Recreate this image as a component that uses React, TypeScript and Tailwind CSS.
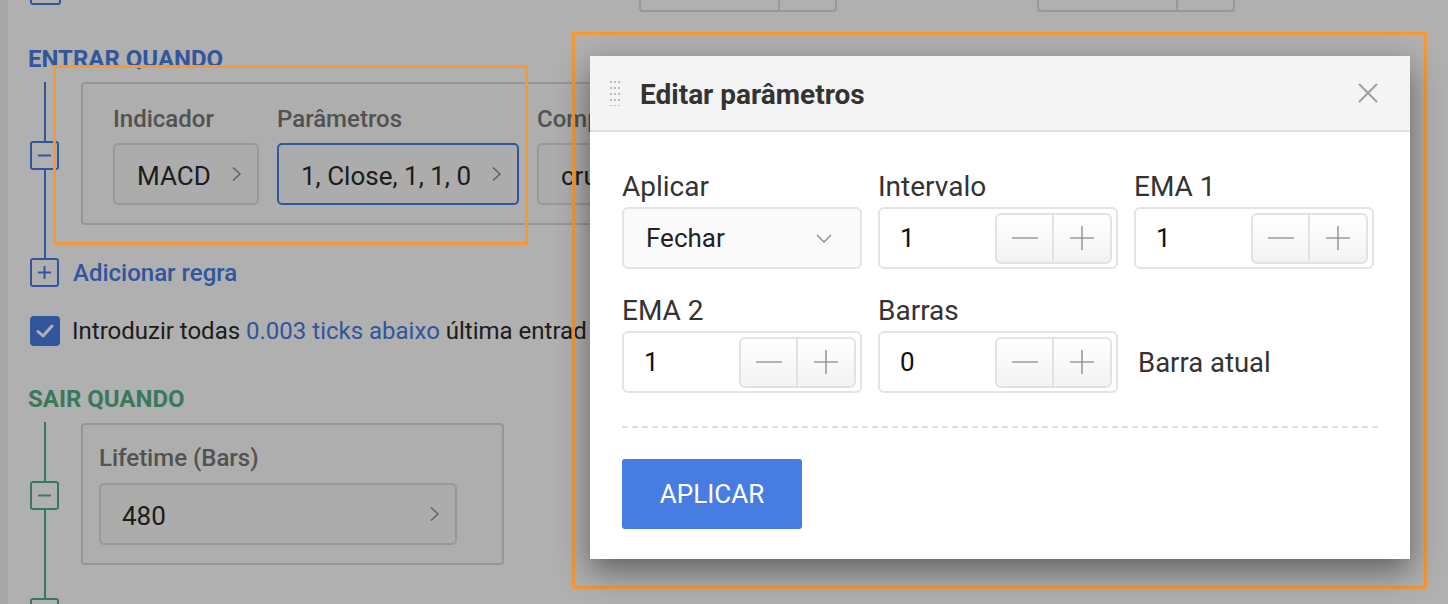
import React from "react";

const ChevronRight = ({ className = "" }: { className?: string }) => (
  <svg width="11" height="16" viewBox="0 0 11 16" className={className}>
    <polyline points="2,1.5 9,8 2,14.5" fill="none" stroke="currentColor" strokeWidth="1.4" />
  </svg>
);

const Minus = () => (
  <svg width="26" height="4" viewBox="0 0 26 4">
    <line x1="0" y1="2" x2="26" y2="2" stroke="#9a9a9a" strokeWidth="1.6" />
  </svg>
);

const Plus = () => (
  <svg width="24" height="24" viewBox="0 0 24 24">
    <line x1="0" y1="12" x2="24" y2="12" stroke="#9a9a9a" strokeWidth="1.6" />
    <line x1="12" y1="0" x2="12" y2="24" stroke="#9a9a9a" strokeWidth="1.6" />
  </svg>
);

const NumField = ({ value }: { value: string }) => (
  <div className="flex h-[62px] w-[240px] items-center justify-between rounded-[6px] border-2 border-[#e4e4e4] bg-white pl-[20px] pr-[4px]">
    <span className="text-[26px] leading-[30px] text-[#111]">{value}</span>
    <div className="flex h-[51px] w-[117px] overflow-hidden rounded-[6px] border-2 border-[#e2e2e2] bg-gradient-to-b from-white to-[#f3f3f3]">
      <div className="flex w-[57px] items-center justify-center border-r-2 border-[#e2e2e2]">
        <Minus />
      </div>
      <div className="flex flex-1 items-center justify-center">
        <Plus />
      </div>
    </div>
  </div>
);

const Label = ({ children }: { children: React.ReactNode }) => (
  <div className="mb-[4px] text-[28px] leading-[32px] text-[#333]">{children}</div>
);

const TreeBox = ({ sign, color }: { sign: "-" | "+"; color: string }) => (
  <div
    className={`flex h-[29px] w-[29px] shrink-0 items-center justify-center rounded-[3px] border-2 bg-white ${color}`}
  >
    <svg width="15" height="15" viewBox="0 0 15 15">
      <line x1="1" y1="7.5" x2="14" y2="7.5" stroke="currentColor" strokeWidth="2" />
      {sign === "+" && <line x1="7.5" y1="1" x2="7.5" y2="14" stroke="currentColor" strokeWidth="2" />}
    </svg>
  </div>
);

export default function App() {
  return (
    <div className="relative h-[604px] w-[1448px] overflow-hidden bg-white font-['Roboto',sans-serif]">
      <div className="flex h-full">
        <div className="h-full w-[8px] shrink-0 bg-[#f2f2f2]" />
        <div className="flex flex-1 flex-col pl-[22px]">
          {/* top partial row */}
          <div className="flex h-[12px] shrink-0 items-end">
            <div className="mb-[7px] h-[30px] w-[31px] rounded-[3px] border-2 border-[#477de2]" />
            <div className="ml-[578px] flex h-[50px] w-[198px] rounded-[4px] border-2 border-[#dcdcdc]">
              <div className="w-[139px] border-r-2 border-[#dcdcdc]" />
            </div>
            <div className="ml-[200px] flex h-[50px] w-[198px] rounded-[4px] border-2 border-[#dcdcdc]">
              <div className="w-[139px] border-r-2 border-[#dcdcdc]" />
            </div>
          </div>

          {/* ENTRAR QUANDO */}
          <div className="-ml-[2px] mt-[33px] shrink-0 text-[24px] font-bold leading-[28px] text-[#477de2]">ENTRAR QUANDO</div>

          <div className="mt-[9px] flex h-[176px] shrink-0 items-start">
            <div className="flex h-full w-[29px] shrink-0 flex-col items-center">
              <div className="h-[59px] w-[2px] bg-[#477de2]" />
              <TreeBox sign="-" color="border-[#477de2] text-[#477de2]" />
              <div className="w-[2px] flex-1 bg-[#477de2]" />
            </div>
            <div className="ml-[22px] flex w-[900px] shrink-0 gap-[18px] rounded-[4px] border-2 border-[#dadada] bg-[#fcfcfc] pb-[18px] pl-[30px] pt-[21px]">
              <div className="flex flex-col">
                <div className="mb-[10px] text-[24px] font-medium leading-[28px] text-[#777]">Indicador</div>
                <div className="flex h-[62px] w-[146px] items-center justify-between rounded-[5px] border-2 border-[#dcdcdc] bg-[#f9f9f9] pl-[22px] pr-[15px]">
                  <span className="pt-[3px] text-[26px] leading-[30px] text-[#2a2a2a]">MACD</span>
                  <ChevronRight className="text-[#888]" />
                </div>
              </div>
              <div className="flex flex-col">
                <div className="mb-[10px] text-[24px] font-medium leading-[28px] text-[#777]">Parâmetros</div>
                <div className="flex h-[62px] w-[242px] items-center justify-between rounded-[5px] border-2 border-[#477de2] bg-[#f9f9f9] pl-[22px] pr-[15px]">
                  <span className="pt-[3px] text-[26px] leading-[30px] text-[#2a2a2a]">1, Close, 1, 1, 0</span>
                  <ChevronRight className="text-[#888]" />
                </div>
              </div>
              <div className="flex flex-col">
                <div className="mb-[10px] text-[24px] font-medium leading-[28px] text-[#777]">Comp</div>
                <div className="flex h-[62px] w-[200px] items-center justify-between rounded-[5px] border-2 border-[#dcdcdc] bg-[#f9f9f9] pl-[22px] pr-[15px]">
                  <span className="pt-[3px] text-[26px] leading-[30px] text-[#2a2a2a]">cru</span>
                  <ChevronRight className="text-[#888]" />
                </div>
              </div>
            </div>
          </div>

          <div className="flex h-[29px] shrink-0 items-center">
            <TreeBox sign="+" color="border-[#477de2] text-[#477de2]" />
            <span className="ml-[14px] text-[24px] font-medium leading-[28px] text-[#477de2]">Adicionar regra</span>
          </div>

          <div className="mt-[29px] flex h-[30px] shrink-0 items-center">
            <div className="flex h-[30px] w-[30px] items-center justify-center rounded-[4px] bg-[#477de2]">
              <svg width="18" height="14" viewBox="0 0 18 14">
                <polyline points="2,7.5 7,12 16,2" fill="none" stroke="white" strokeWidth="3" strokeLinejoin="round" strokeLinecap="round" />
              </svg>
            </div>
            <span className="ml-[12px] whitespace-nowrap text-[24px] leading-[28px] text-[#2a2a2a]">
              Introduzir todas <span className="text-[#477de2]">0.003 ticks abaixo</span> última entrad
            </span>
          </div>

          {/* SAIR QUANDO */}
          <div className="-ml-[2px] mt-[39px] shrink-0 text-[24px] font-bold leading-[28px] text-[#52b088]">SAIR QUANDO</div>

          <div className="mt-[9px] flex h-[176px] shrink-0 items-start">
            <div className="flex h-full w-[29px] shrink-0 flex-col items-center">
              <div className="h-[59px] w-[2px] bg-[#52b088]" />
              <TreeBox sign="-" color="border-[#52b088] text-[#52b088]" />
              <div className="w-[2px] flex-1 bg-[#52b088]" />
            </div>
            <div className="ml-[22px] mt-[1px] flex w-[423px] shrink-0 flex-col rounded-[4px] border-2 border-[#dadada] bg-[#fcfcfc] pb-[18px] pl-[16px] pt-[19px]">
              <div className="mb-[11px] text-[24px] font-medium leading-[28px] text-[#777]">Lifetime (Bars)</div>
              <div className="flex h-[62px] w-[358px] items-center justify-between rounded-[5px] border-2 border-[#dcdcdc] bg-[#f9f9f9] pl-[21px] pr-[15px]">
                <span className="pt-[3px] text-[26px] leading-[30px] text-[#2a2a2a]">480</span>
                <ChevronRight className="text-[#888]" />
              </div>
            </div>
          </div>

          <div className="flex h-[29px] shrink-0 items-center">
            <TreeBox sign="-" color="border-[#52b088] text-[#52b088]" />
            <span className="ml-[36px] whitespace-nowrap pt-[8px] text-[24px] font-medium leading-[28px] text-[#2a2a2a]">
              Sair de todas as posições abertas após o tempo limite
            </span>
          </div>
        </div>
      </div>

      {/* dim overlay */}
      <div className="absolute inset-0 bg-black/[0.31]" />

      {/* annotation rectangles */}
      <div className="absolute left-[53px] top-[65px] h-[180px] w-[475px] border-[3px] border-[#f2993a]" />
      <div className="absolute left-[572px] top-[32px] h-[557px] w-[855px] border-[3px] border-[#f2993a]" />

      {/* modal */}
      <div className="absolute left-[590px] top-[56px] w-[820px] bg-white shadow-[0_12px_30px_rgba(0,0,0,0.45)]">
        <div className="flex h-[76px] items-center border-b-2 border-[#e2e2e2] bg-[#f4f4f4] pl-[20px] pr-[32px]">
          <svg width="10" height="26" viewBox="0 0 10 26" className="shrink-0">
            {[0, 1, 2, 3, 4].map((r) =>
              [0, 1, 2].map((c) => (
                <rect key={`${r}-${c}`} x={c * 4} y={1 + r * 6} width="2" height="2" fill="#bdbdbd" />
              ))
            )}
          </svg>
          <div className="ml-[20px] flex-1 pt-[4px] text-[28px] font-bold leading-[32px] text-[#333]">Editar parâmetros</div>
          <svg width="20" height="20" viewBox="0 0 20 20" className="shrink-0">
            <line x1="1" y1="1" x2="19" y2="19" stroke="#9aa0a6" strokeWidth="2" />
            <line x1="19" y1="1" x2="1" y2="19" stroke="#9aa0a6" strokeWidth="2" />
          </svg>
        </div>

        <div className="px-[32px] pb-[30px] pt-[39px]">
          <div className="flex gap-[16px]">
            <div>
              <Label>Aplicar</Label>
              <div className="flex h-[62px] w-[240px] items-center justify-between rounded-[6px] border-2 border-[#e4e4e4] bg-[#fafafa] pl-[22px] pr-[28px]">
                <span className="text-[26px] leading-[30px] text-[#222]">Fechar</span>
                <svg width="16" height="9" viewBox="0 0 16 9">
                  <polyline points="1,1 8,8 15,1" fill="none" stroke="#888" strokeWidth="1.3" />
                </svg>
              </div>
            </div>
            <div>
              <Label>Intervalo</Label>
              <NumField value="1" />
            </div>
            <div>
              <Label>EMA 1</Label>
              <NumField value="1" />
            </div>
          </div>

          <div className="mt-[26px] flex items-end gap-[16px]">
            <div>
              <Label>EMA 2</Label>
              <NumField value="1" />
            </div>
            <div>
              <Label>Barras</Label>
              <NumField value="0" />
            </div>
            <div className="flex h-[62px] items-center pl-[4px] pt-[2px] text-[27.5px] text-[#333]">Barra atual</div>
          </div>

          <div className="mt-[33px] border-t-2 border-dashed border-[#dedede]" />

          <button className="mt-[31px] flex h-[70px] w-[180px] items-center justify-center rounded-[3px] bg-[#477de2] text-[26px] text-white">
            APLICAR
          </button>
        </div>
      </div>
    </div>
  );
}
